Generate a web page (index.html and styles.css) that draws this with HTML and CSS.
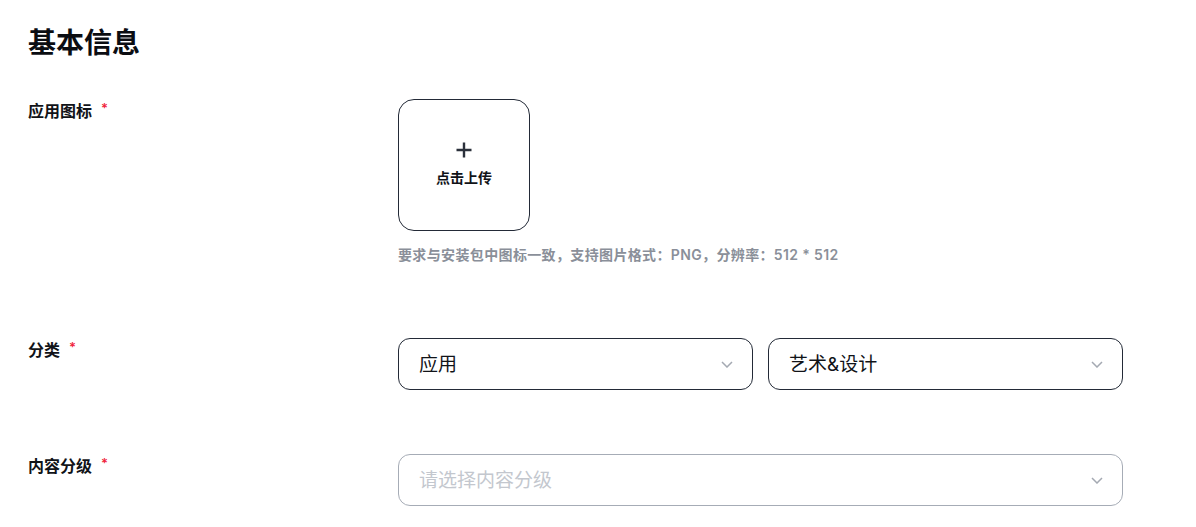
FILE: index.html
```html
<!DOCTYPE html>
<html lang="zh-CN">
<head>
<meta charset="utf-8">
<title>基本信息</title>
<link rel="stylesheet" href="styles.css">
</head>
<body>
<main class="page">
  <h2 class="title">基本信息</h2>

  <section class="row row-icon">
    <div class="label">应用图标<span class="req">*</span></div>
    <div class="field">
      <button class="upload" type="button">
        <svg class="plus" width="18" height="18" viewBox="0 0 18 18" aria-hidden="true">
          <path d="M9 1.5v15M1.5 9h15" stroke="#2b303b" stroke-width="2.4" stroke-linecap="butt" fill="none"/>
        </svg>
        <span class="upload-text">点击上传</span>
      </button>
      <p class="hint">要求与安装包中图标一致，支持图片格式：PNG，分辨率：512 * 512</p>
    </div>
  </section>

  <section class="row">
    <div class="label">分类<span class="req">*</span></div>
    <div class="field selects">
      <div class="select"><span class="value">应用</span><svg class="chev" width="12" height="7" viewBox="0 0 12 7"><path d="M1 1l5 5 5-5" stroke="#a4a9b2" stroke-width="1.5" fill="none"/></svg></div>
      <div class="select"><span class="value">艺术&amp;设计</span><svg class="chev" width="12" height="7" viewBox="0 0 12 7"><path d="M1 1l5 5 5-5" stroke="#a4a9b2" stroke-width="1.5" fill="none"/></svg></div>
    </div>
  </section>

  <section class="row">
    <div class="label">内容分级<span class="req">*</span></div>
    <div class="field">
      <div class="select select-empty"><span class="placeholder">请选择内容分级</span><svg class="chev" width="12" height="7" viewBox="0 0 12 7"><path d="M1 1l5 5 5-5" stroke="#a4a9b2" stroke-width="1.5" fill="none"/></svg></div>
    </div>
  </section>
</main>
</body>
</html>
```

FILE: styles.css
```css
* { box-sizing: border-box; }

body {
  margin: 0;
  background: #ffffff;
  color: #111318;
  font-family: Inter, "Noto Sans CJK SC", "Noto Sans", sans-serif;
}

.page {
  padding: 25px 28px 0 28px;
}

.title {
  margin: 0;
  font-size: 28px;
  line-height: 36px;
  font-weight: 700;
  color: #0b0d12;
}

.row {
  display: grid;
  grid-template-columns: 370px 725px;
  margin-top: 64px;
}

.row-icon {
  margin-top: 38px;
}

.label {
  font-size: 16px;
  line-height: 24px;
  font-weight: 600;
  color: #111318;
}

.req {
  display: inline-block;
  margin-left: 9px;
  color: #f0243c;
  font-size: 13px;
  line-height: 14px;
  vertical-align: top;
  margin-top: 2px;
}

.field {
  display: flex;
  flex-direction: column;
  align-items: flex-start;
}

.upload {
  width: 132px;
  height: 132px;
  border: 1px solid #232a37;
  border-radius: 16px;
  background: #fff;
  display: flex;
  flex-direction: column;
  align-items: center;
  justify-content: center;
  gap: 9px;
  padding: 0 0 2px 0;
  font-family: inherit;
  cursor: pointer;
}

.plus { display: block; }

.upload-text {
  font-size: 14px;
  line-height: 20px;
  font-weight: 600;
  color: #111318;
}

.hint {
  margin: 14px 0 9px 0;
  font-size: 14px;
  line-height: 20px;
  font-weight: 600;
  letter-spacing: 0.36px;
  color: #8a8f99;
}

.selects {
  flex-direction: row;
  gap: 15px;
}

.select {
  width: 100%;
  height: 52px;
  border: 1px solid #232a37;
  border-radius: 12px;
  display: flex;
  align-items: center;
  justify-content: space-between;
  padding: 2px 19px 0 20px;
  background: #fff;
}

.selects .select {
  flex: 1 1 0;
}

.value {
  font-size: 19px;
  line-height: 26px;
  color: #111318;
}

.select-empty {
  border-color: #a6acb6;
}

.placeholder {
  font-size: 19px;
  line-height: 26px;
  color: #c3c7ce;
}

.chev { display: block; margin-top: -2px; }
```
